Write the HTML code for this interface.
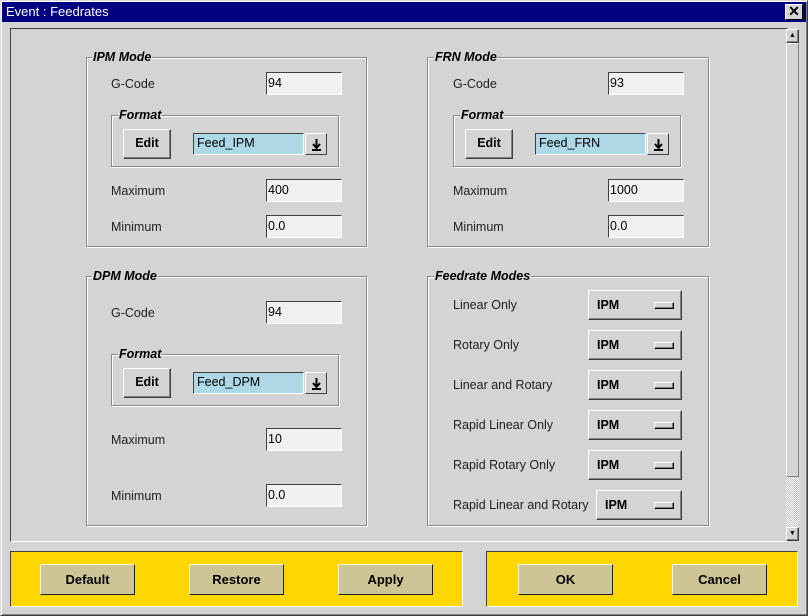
<!DOCTYPE html>
<html><head><style>
*{box-sizing:border-box;margin:0;padding:0}
body{width:808px;height:616px;background:#d4d4d4;font-family:"Liberation Sans",sans-serif;font-size:12px;color:#000;position:relative;overflow:hidden}
div,span{position:absolute}
.win{left:0;top:0;width:808px;height:616px;border:1px solid;border-color:#dcdcdc #404040 #404040 #dcdcdc;box-shadow:inset 1px 1px #fff,inset -1px -1px #808080}
.title{left:2px;top:2px;width:804px;height:20px;background:#000080;color:#fff;font-size:13px;line-height:20px;padding-left:4px}
.x{left:785px;top:4px;width:18px;height:16px;background:#d4d4d4;border:1px solid;border-color:#fff #000 #000 #fff;color:#000;font-size:14px;line-height:13px;text-align:center;font-weight:bold}
.frame{left:10px;top:28px;width:778px;height:514px;border:1px solid;border-color:#404040 #fff #fff #404040}
.grp{border:1px solid #8a8a8a;box-shadow:1px 1px #fff,inset 1px 1px #fff}
.gt{background:#d4d4d4;font-weight:bold;font-style:italic;font-size:12.5px;padding:0 1px;line-height:14px}
.lbl{font-size:12.5px;line-height:14px;color:#222}
.inp{width:76px;height:23px;background:#f0f0f0;border:1px solid;border-color:#404040 #fff #fff #404040;padding-left:1px;line-height:20px;font-size:12.5px}
.btn{background:#d4d4d4;border:1px solid;border-color:#fff #404040 #404040 #fff;box-shadow:inset -1px -1px #808080;font-weight:bold;text-align:center;font-size:12.5px}
.combo{width:111px;height:22px;background:#add8e6;border:1px solid;border-color:#404040 #fff #fff #404040;padding-left:3px;line-height:19px;font-size:12.5px}
.arr{width:22px;height:22px;background:#d4d4d4;border:1px solid;border-color:#fff #404040 #404040 #fff}
.arr svg{position:absolute;left:5px;top:4px}
.opt{height:30px;width:94px}
.opt b{position:absolute;left:8px;top:7px;font-size:12.5px}
.opt i{position:absolute;left:65px;top:11px;width:20px;height:7px;background:#d4d4d4;border:1px solid;border-color:#fff #000 #000 #fff;box-shadow:inset -1px -1px #808080}
.yel{background:#ffd700;border:1px solid;border-color:#404040 #fff #fff #404040;top:551px;height:56px}
.yb{background:#cdc596;border:1px solid;border-color:#fff8d0 #202020 #202020 #fff8d0;width:95px;height:31px;top:564px;font-weight:bold;text-align:center;line-height:29px;font-size:13px}
</style></head><body>
<div class="win"></div>
<div class="title">Event : Feedrates</div>
<div class="x">✕</div>
<div class="frame"></div>
<div style="left:786px;top:29px;width:13px;height:512px;background:repeating-conic-gradient(#fff 0 25%,#c0c0c0 0 50%) 0 0/2px 2px"></div>
<div class="btn" style="left:786px;top:29px;width:13px;height:14px;font-size:7px;line-height:12px">▲</div>
<div class="btn" style="left:786px;top:43px;width:13px;height:434px;box-shadow:none;border-color:#fff #808080 #808080 #fff"></div>
<div class="btn" style="left:786px;top:527px;width:13px;height:14px;font-size:7px;line-height:12px">▼</div>

<div class="grp" style="left:86px;top:57px;width:281px;height:190px"></div>
<div class="gt" style="left:92px;top:50px">IPM Mode</div>
<div class="lbl" style="left:111px;top:77px">G-Code</div>
<div class="inp" style="left:266px;top:72px">94</div>
<div class="grp" style="left:111px;top:115px;width:228px;height:52px"></div>
<div class="gt" style="left:118px;top:108px">Format</div>
<div class="btn" style="left:123px;top:129px;width:48px;height:30px;line-height:27px">Edit</div>
<div class="combo" style="left:193px;top:133px">Feed_IPM</div>
<div class="arr" style="left:305px;top:133px"><svg width="11" height="13"><path d="M5.5 1v8M2 6l3.5 4 3.5-4" stroke="#000" stroke-width="2" fill="none"/><rect x="1" y="11" width="9" height="2"/></svg></div>
<div class="lbl" style="left:111px;top:184px">Maximum</div>
<div class="inp" style="left:266px;top:179px">400</div>
<div class="lbl" style="left:111px;top:220px">Minimum</div>
<div class="inp" style="left:266px;top:215px">0.0</div>

<div class="grp" style="left:427px;top:57px;width:282px;height:190px"></div>
<div class="gt" style="left:434px;top:50px">FRN Mode</div>
<div class="lbl" style="left:453px;top:77px">G-Code</div>
<div class="inp" style="left:608px;top:72px">93</div>
<div class="grp" style="left:453px;top:115px;width:228px;height:52px"></div>
<div class="gt" style="left:460px;top:108px">Format</div>
<div class="btn" style="left:465px;top:129px;width:48px;height:30px;line-height:27px">Edit</div>
<div class="combo" style="left:535px;top:133px">Feed_FRN</div>
<div class="arr" style="left:647px;top:133px"><svg width="11" height="13"><path d="M5.5 1v8M2 6l3.5 4 3.5-4" stroke="#000" stroke-width="2" fill="none"/><rect x="1" y="11" width="9" height="2"/></svg></div>
<div class="lbl" style="left:453px;top:184px">Maximum</div>
<div class="inp" style="left:608px;top:179px">1000</div>
<div class="lbl" style="left:453px;top:220px">Minimum</div>
<div class="inp" style="left:608px;top:215px">0.0</div>

<div class="grp" style="left:86px;top:276px;width:281px;height:250px"></div>
<div class="gt" style="left:92px;top:269px">DPM Mode</div>
<div class="lbl" style="left:111px;top:306px">G-Code</div>
<div class="inp" style="left:266px;top:301px">94</div>
<div class="grp" style="left:111px;top:354px;width:228px;height:52px"></div>
<div class="gt" style="left:118px;top:347px">Format</div>
<div class="btn" style="left:123px;top:368px;width:48px;height:30px;line-height:27px">Edit</div>
<div class="combo" style="left:193px;top:372px">Feed_DPM</div>
<div class="arr" style="left:305px;top:372px"><svg width="11" height="13"><path d="M5.5 1v8M2 6l3.5 4 3.5-4" stroke="#000" stroke-width="2" fill="none"/><rect x="1" y="11" width="9" height="2"/></svg></div>
<div class="lbl" style="left:111px;top:433px">Maximum</div>
<div class="inp" style="left:266px;top:428px">10</div>
<div class="lbl" style="left:111px;top:489px">Minimum</div>
<div class="inp" style="left:266px;top:484px">0.0</div>

<div class="grp" style="left:427px;top:276px;width:282px;height:250px"></div>
<div class="gt" style="left:434px;top:269px">Feedrate Modes</div>
<div class="lbl" style="left:453px;top:298px">Linear Only</div>
<div class="btn opt" style="left:588px;top:290px"><b>IPM</b><i></i></div>
<div class="lbl" style="left:453px;top:338px">Rotary Only</div>
<div class="btn opt" style="left:588px;top:330px"><b>IPM</b><i></i></div>
<div class="lbl" style="left:453px;top:378px">Linear and Rotary</div>
<div class="btn opt" style="left:588px;top:370px"><b>IPM</b><i></i></div>
<div class="lbl" style="left:453px;top:418px">Rapid Linear Only</div>
<div class="btn opt" style="left:588px;top:410px"><b>IPM</b><i></i></div>
<div class="lbl" style="left:453px;top:458px">Rapid Rotary Only</div>
<div class="btn opt" style="left:588px;top:450px"><b>IPM</b><i></i></div>
<div class="lbl" style="left:453px;top:498px">Rapid Linear and Rotary</div>
<div class="btn opt" style="left:596px;top:490px;width:86px"><b>IPM</b><i style="left:57px"></i></div>

<div class="yel" style="left:10px;width:453px"></div>
<div class="yel" style="left:486px;width:312px"></div>
<div class="yb" style="left:40px">Default</div>
<div class="yb" style="left:189px">Restore</div>
<div class="yb" style="left:338px">Apply</div>
<div class="yb" style="left:518px">OK</div>
<div class="yb" style="left:672px">Cancel</div>
</body></html>
